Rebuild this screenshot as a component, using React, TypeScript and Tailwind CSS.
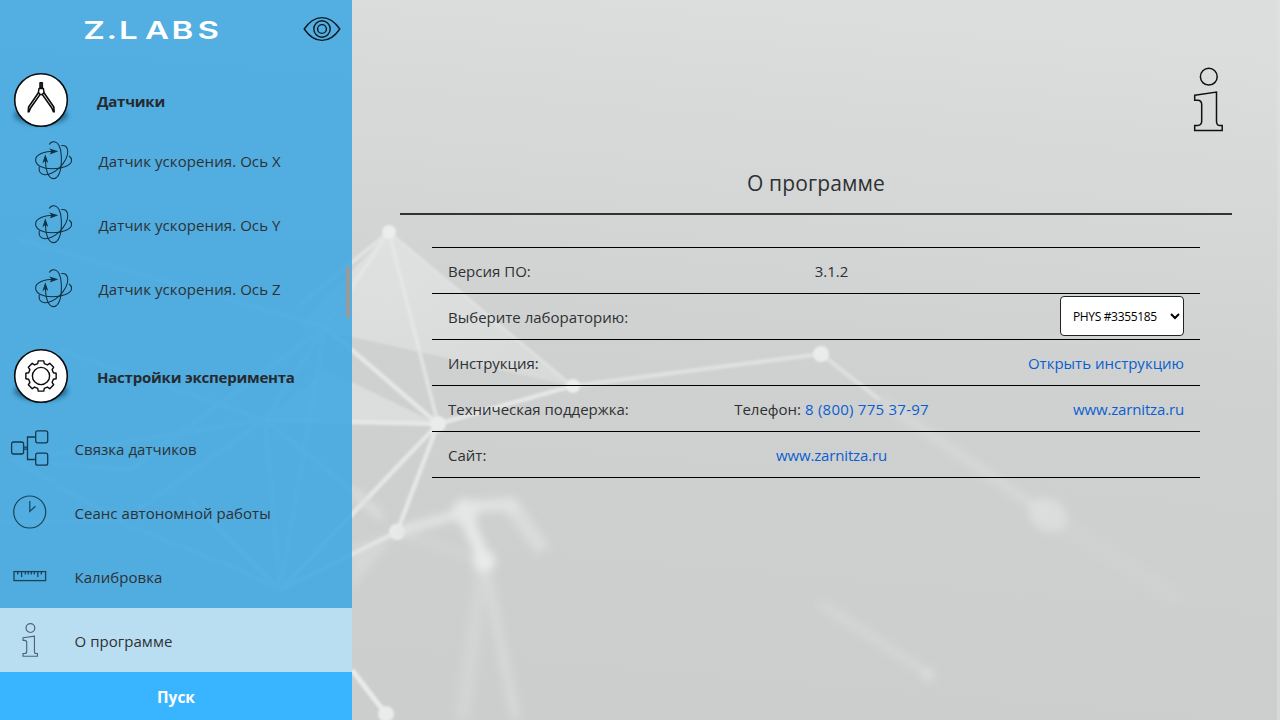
import type { ReactNode } from "react";

const gearPath = (() => {
  const pts: string[] = [];
  for (let k = 0; k < 8; k++) {
    const a = (k * Math.PI) / 4;
    const steps: [number, number][] = [
      [12.8, -0.26],
      [15.4, -0.18],
      [15.4, 0.18],
      [12.8, 0.26],
    ];
    steps.forEach(([r, d]) => pts.push(`${(28 + r * Math.cos(a + d)).toFixed(2)} ${(28 + r * Math.sin(a + d)).toFixed(2)}`));
  }
  return `M${pts.join("L")}Z`;
})();

function Backdrop() {
  return (
    <svg className="absolute inset-0" width="1280" height="720" viewBox="0 0 1280 720" fill="none">
      <defs>
        <linearGradient id="wall" x1="0.6" y1="0" x2="0.45" y2="1">
          <stop offset="0" stopColor="#dcdedd" />
          <stop offset="0.5" stopColor="#cfd1d0" />
          <stop offset="1" stopColor="#cccecd" />
        </linearGradient>
        <radialGradient id="veil" gradientUnits="userSpaceOnUse" cx="389" cy="250" r="190">
          <stop offset="0" stopColor="#e2e4e3" stopOpacity="0.8" />
          <stop offset="1" stopColor="#e0e2e1" stopOpacity="0.55" />
        </radialGradient>
        <filter id="soft1" x="-10%" y="-10%" width="120%" height="120%"><feGaussianBlur stdDeviation="1.3" /></filter>
        <filter id="soft2" x="-20%" y="-20%" width="140%" height="140%"><feGaussianBlur stdDeviation="4.2" /></filter>
      </defs>
      <rect width="1280" height="720" fill="url(#wall)" />
      <g filter="url(#soft1)">
        <path d="M389 232L572 386L352 337L300 325Z" fill="url(#veil)" />
        <path d="M352 382L438 424L352 421L265 420L325 370Z" fill="#e3e6e5" fillOpacity="0.6" />
        <path d="M389 232L325 327L20 240M389 232L300 305M389 232L438 424" stroke="#e6e9e8" strokeWidth="4" strokeOpacity="0.7" />
        <path d="M389 232L572 386" stroke="#e3e6e5" strokeWidth="3" strokeOpacity="0.7" />
        <path d="M438 424L325 327M438 424L265 420M438 424L280 590M438 424L397 532M438 424L572 386M397 532L280 590" stroke="#e8ebea" strokeWidth="4.5" strokeOpacity="0.85" />
        <path d="M572 386L821 354" stroke="#e2e5e4" strokeWidth="4.5" strokeOpacity="0.75" />
        <path d="M821 354L880 400" stroke="#dfe2e1" strokeWidth="4.5" strokeOpacity="0.8" />
        <path d="M265 420L15 460L120 522L240 570L280 590M265 420L120 522M265 420L280 590M265 420L352 490M325 327L280 590M325 327L130 470L15 460M265 420L60 350M265 420L325 327M120 522L0 522M280 590L190 500" stroke="#eef0ef" strokeWidth="5.5" strokeOpacity="0.4" />
        <path d="M352 670L386 714" stroke="#e8ebea" strokeWidth="5" />
        <circle cx="389" cy="232" r="7" fill="#ebeeed" />
        <circle cx="438" cy="424" r="8" fill="#e9eceb" />
        <circle cx="573" cy="386" r="7" fill="#ebeeed" />
        <circle cx="821" cy="354" r="8" fill="#e9eceb" />
        <circle cx="397" cy="532" r="8" fill="#e9eceb" />
        <circle cx="386" cy="714" r="8" fill="#e9eceb" />
      </g>
      <g filter="url(#soft2)">
        <path d="M397 532L465 512" stroke="#e4e7e6" strokeWidth="8" />
        <path d="M465 514L484 560" stroke="#e6e9e8" strokeWidth="13" />
        <path d="M465 507L512 504" stroke="#e0e3e2" strokeWidth="12" />
        <path d="M512 506L543 550" stroke="#dcdfde" strokeWidth="16" strokeOpacity="0.8" />
        <path d="M397 532L475 558" stroke="#dfe2e1" strokeWidth="4" strokeOpacity="0.5" />
        <path d="M484 560L516 720" stroke="#dcdfde" strokeWidth="10" strokeOpacity="0.6" />
        <path d="M484 560L462 720" stroke="#d8dbda" strokeWidth="15" strokeOpacity="0.5" />
        <path d="M352 490L382 518" stroke="#dcdfde" strokeWidth="7" />
        <path d="M880 400L1048 515" stroke="#d8dbda" strokeWidth="9" strokeOpacity="0.8" />
        <path d="M1048 515L1180 600" stroke="#d2d4d3" strokeWidth="16" strokeOpacity="0.4" />
        <path d="M821 604L930 675" stroke="#d7dad9" strokeWidth="9" strokeOpacity="0.7" />
        <path d="M352 545L397 532L352 590" fill="#dcdfde" fillOpacity="0.5" />
        <circle cx="465" cy="512" r="13" fill="#e4e7e6" />
        <circle cx="484" cy="561" r="11" fill="#e8ebea" />
        <circle cx="510" cy="506" r="9" fill="#dfe2e1" />
        <ellipse cx="1048" cy="515" rx="21" ry="16" transform="rotate(30 1048 515)" fill="#dcdfde" fillOpacity="0.9" />
        <circle cx="928" cy="675" r="6" fill="#dbdedd" />
      </g>
      <rect x="1277" width="3" height="720" fill="#e2e4e3" fillOpacity="0.45" />
    </svg>
  );
}

function SectionBadge({ children }: { children: ReactNode }) {
  return (
    <svg width="62" height="58" viewBox="-3 0 62 58" fill="none" className="shrink-0">
      <defs>
        <filter id="badge-shade" x="-20%" y="-30%" width="140%" height="160%"><feGaussianBlur stdDeviation="1.9" /></filter>
      </defs>
      <ellipse cx="28" cy="43" rx="27" ry="10" fill="#1d5f86" fillOpacity="0.75" filter="url(#badge-shade)" />
      <circle cx="28" cy="28" r="26.3" fill="#fff" stroke="#0b0b0b" strokeWidth="1.6" />
      {children}
    </svg>
  );
}

function CompassGlyph() {
  return (
    <g stroke="#0b0b0b" strokeLinejoin="round">
      <path d="M26.8 10.5H29.6V16H26.8Z" fill="#222" strokeWidth="1" />
      <path d="M26 16.5H30.4L31 20.5L29.3 22.5H27L25.4 20.5Z" strokeWidth="1.5" />
      <path d="M25.6 20.5L15.6 35L15.2 40.5M27 22.6L17.4 36.2L15.8 40.3M30.8 20.5L40.8 35L41.2 40.5M29.4 22.6L39 36.2L40.6 40.3" strokeWidth="1.6" />
    </g>
  );
}

function AxisIcon() {
  return (
    <svg width="40" height="40" viewBox="0 0 40 40" fill="none" stroke="#12303f" strokeWidth="1.05" className="shrink-0">
      <path d="M21 11.3C10 11.3 1.6 14.5 1.6 20C1.6 25.5 9 28.7 18 28.7C28 28.7 37.6 25.6 37.6 20.3C37.6 18.4 36.6 17 35 16" />
      <path d="M15.3 4.6C16.2 2.8 17.6 1.8 19.4 1.8C24.6 1.8 27.4 9 27.4 20C27.4 31 24.4 38.6 19.3 38.6C14.6 38.6 11.4 31 11.4 18" />
      <path d="M27.3 5.6C30.8 4.8 33.8 6.8 33.8 11.5C33.8 17 30.8 22.2 25.8 27.3C20 32.8 14 35.3 9.6 34.5C6 33.8 4.6 31 5.3 26.6" />
      <path d="M16.8 9.6L22.6 11.4L17 13.4L18.4 11.4Z" fill="#12303f" />
      <path d="M9.5 21.6L11.3 16L13.2 21.4L11.4 20Z" fill="#12303f" />
    </svg>
  );
}

function InfoIcon({ width, height, stroke, strokeWidth }: { width: number; height: number; stroke: string; strokeWidth: number }) {
  return (
    <svg width={width} height={height} viewBox="0 0 30 65" fill="none" stroke={stroke} strokeWidth={strokeWidth} className="shrink-0">
      <ellipse cx="15.8" cy="9.7" rx="8.4" ry="8.4" />
      <path d="M1.7 28.2L23.5 25V54C23.5 57.3 24.5 58.4 26.3 58.4H29.2V63.6H1.7V58.4H4.7C7.7 58.4 8.7 57 8.7 54V37.5C8.7 34.3 7.5 33.2 4.5 33.2H1.7Z" />
    </svg>
  );
}

function LinkIcon() {
  return (
    <svg width="40" height="38" viewBox="10 429 40 38" fill="none" stroke="#123a50" strokeWidth="1.3">
      <rect x="11.6" y="442" width="12" height="12" rx="2" />
      <rect x="35.7" y="430.8" width="12" height="12" rx="2" />
      <rect x="35.7" y="453.2" width="12" height="12" rx="2" />
      <path d="M23.6 447.2H27.5M23.6 449.2H27.5M35.7 437H27.5V459.5H35.7" />
    </svg>
  );
}

function ClockIcon() {
  return (
    <svg width="34" height="34" viewBox="12.8 495 34 34" fill="none" stroke="#174459" strokeWidth="1.2">
      <circle cx="29.5" cy="512" r="16" />
      <path d="M29.6 501V511.4L35.2 506.2" />
    </svg>
  );
}

function RulerIcon() {
  return (
    <svg width="34" height="12" viewBox="12.7 570 34 12" fill="none" stroke="#174459" strokeWidth="1.3">
      <rect x="13.7" y="571.6" width="31.6" height="9" />
      <path d="M17.5 572V574.5M21.3 572V577M25 572V574.5M28 572V574.5M31 572V574.5M34 572V574.5M37.5 572V577M41 572V574.5" />
    </svg>
  );
}

function EyeIcon() {
  return (
    <svg width="38" height="26" viewBox="0 0 38 26" fill="none" stroke="#0d1a22" strokeWidth="1.4">
      <path d="M1.2 13C6 6 12 1.6 19 1.6S32 6 36.8 13C32 20 26 24.4 19 24.4S6 20 1.2 13Z" strokeLinejoin="round" />
      <circle cx="19" cy="13" r="8.2" />
      <circle cx="19" cy="13" r="4.4" />
    </svg>
  );
}

function Logo() {
  return (
    <svg width="140" height="32" viewBox="0 -5 140 32" fill="#fff">
      <text transform="scale(1.35 1)" x="-0.6 16.6 26 45.2 64.8 84" y="18.2" fontFamily="Inter, sans-serif" fontSize="24.5" fontWeight="600">Z.LABS</text>
    </svg>
  );
}

const sensors = ["X", "Y", "Z"];

const settings = [
  { label: "Связка датчиков", icon: <LinkIcon />, active: false },
  { label: "Сеанс автономной работы", icon: <ClockIcon />, active: false },
  { label: "Калибровка", icon: <RulerIcon />, active: false },
  { label: "О программе", icon: <InfoIcon width={16} height={34} stroke="#4d6472" strokeWidth={2.2} />, active: true },
];

function Section({ title, glyph }: { title: string; glyph: ReactNode }) {
  return (
    <div className="flex h-14 items-start pl-[10px]">
      <SectionBadge>{glyph}</SectionBadge>
      <h2 className="ml-[25px] pt-[17px] text-[15px] leading-6 font-bold tracking-[-0.22px] text-[#262a2e]">{title}</h2>
    </div>
  );
}

function Sidebar() {
  return (
    <aside className="relative flex w-[352px] shrink-0 flex-col bg-[#3ba6e2]/85">
      <header className="flex h-[72px] items-start justify-between pt-4 pr-[11px] pl-[84px]">
        <Logo />
        <EyeIcon />
      </header>
      <nav className="flex flex-1 flex-col">
        <Section title="Датчики" glyph={<CompassGlyph />} />
        {sensors.map((axis) => (
          <a key={axis} className="flex h-16 items-center pl-[34px]">
            <AxisIcon />
            <span className="ml-[24.5px] pt-px tracking-[0.08px]">Датчик ускорения. Ось {axis}</span>
          </a>
        ))}
        <div className="mt-7">
          <Section
            title="Настройки эксперимента"
            glyph={
              <g stroke="#0b0b0b" strokeWidth="1.4" strokeLinejoin="round">
                <path d={gearPath} />
                <circle cx="28" cy="28" r="8.6" />
              </g>
            }
          />
        </div>
        <div className="mt-3">
          {settings.map((s) => (
            <a key={s.label} className={s.active ? "flex h-16 items-center bg-white/60" : "flex h-16 items-center"}>
              <span className="flex w-[59px] shrink-0 justify-center">{s.icon}</span>
              <span className="ml-[15.5px] pt-px tracking-[0.04px]">{s.label}</span>
            </a>
          ))}
        </div>
      </nav>
      <button className="h-12 bg-[#39b5ff] pt-[2px] text-[15.5px] font-bold text-white">Пуск</button>
      <div className="absolute top-[266px] right-[2px] h-[52px] w-1 rounded-full bg-[#9a9a9c]" />
    </aside>
  );
}

function Row({ label, middle, end }: { label: string; middle?: ReactNode; end?: ReactNode }) {
  return (
    <div className="grid h-[46px] grid-cols-[286px_195px_1fr] items-center border-b border-black px-4 whitespace-nowrap">
      <span className="pt-px">{label}</span>
      <span className="pt-px text-center">{middle}</span>
      <span className="flex justify-end">{end}</span>
    </div>
  );
}

function Link({ children, className = "" }: { children: ReactNode; className?: string }) {
  return <a className={`text-[#0a5fd0] ${className}`}>{children}</a>;
}

export default function App() {
  return (
    <div className="relative h-[720px] w-[1280px] overflow-hidden font-['Open_Sans',sans-serif] text-[15px] leading-6 text-[#2e3134]">
      <Backdrop />
      <div className="relative flex h-full">
        <Sidebar />
        <main className="flex-1 px-12">
          <div className="flex h-[164px] justify-end pt-[67px] pr-[9px]">
            <InfoIcon width={30} height={65} stroke="#111" strokeWidth={1.5} />
          </div>
          <h1 className="h-[51px] border-b-2 border-[#333] pt-px text-center text-[21px] leading-9 tracking-[0.15px]">О программе</h1>
          <section className="mx-8 mt-8 border-t border-black">
            <Row label="Версия ПО:" middle="3.1.2" />
            <Row
              label="Выберите лабораторию:"
              end={
                <select className="mb-[1px] h-10 w-[124px] rounded border border-[#222] bg-white px-2 text-[12px] tracking-[-0.35px] text-black">
                  <option>PHYS #3355185</option>
                </select>
              }
            />
            <Row label="Инструкция:" end={<span className="pt-px"><Link>Открыть инструкцию</Link></span>} />
            <Row
              label="Техническая поддержка:"
              middle={<>Телефон: <Link className="tracking-[0.25px]">8 (800) 775 37-97</Link></>}
              end={<span className="pt-px"><Link className="tracking-[-0.15px]">www.zarnitza.ru</Link></span>}
            />
            <Row label="Сайт:" middle={<Link className="tracking-[-0.15px]">www.zarnitza.ru</Link>} />
          </section>
        </main>
      </div>
    </div>
  );
}
